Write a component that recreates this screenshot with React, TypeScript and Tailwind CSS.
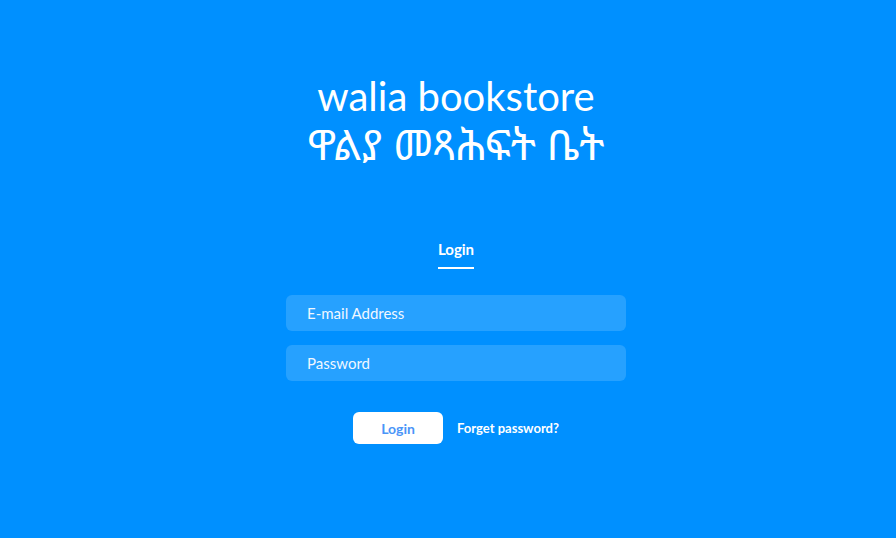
import React from "react";

export default function App() {
  return (
    <div className="w-[896px] h-[538px] bg-[#0090ff] flex flex-col items-center pl-[16px] text-white" style={{ fontFamily: "Lato, 'Noto Sans Ethiopic', sans-serif" }}>
      <div className="mt-[76px] flex flex-col items-center">
        <h1 className="text-[40px] leading-[40px] font-normal">walia bookstore</h1>
        <h2 className="text-[42px] leading-[56px] font-normal" style={{ fontFamily: "'Noto Sans Ethiopic', Lato, sans-serif" }}>ዋልያ መጻሕፍት ቤት</h2>
      </div>
      <div className="mt-[67px] flex flex-col items-center">
        <span className="text-[15px] font-bold leading-[20px]">Login</span>
        <div className="mt-[8px] w-[36px] h-[2px] bg-white" />
      </div>
      <div className="mt-[26px] flex flex-col gap-[14px] w-[340px]">
        <input className="h-[36px] rounded-[6px] bg-[#26a1ff] px-[21px] text-[15px] text-white placeholder-[#f0f7ff] outline-none" placeholder="E-mail Address" />
        <input type="text" className="h-[36px] rounded-[6px] bg-[#26a1ff] px-[21px] text-[15px] text-white placeholder-[#f0f7ff] outline-none" placeholder="Password" />
      </div>
      <div className="mt-[31px] flex items-center gap-[14px]">
        <button className="w-[90px] h-[32px] rounded-[6px] bg-white text-[#4a95f8] text-[14px] font-bold">Login</button>
        <span className="text-[13px] font-bold pt-[1px]">Forget password?</span>
      </div>
    </div>
  );
}
